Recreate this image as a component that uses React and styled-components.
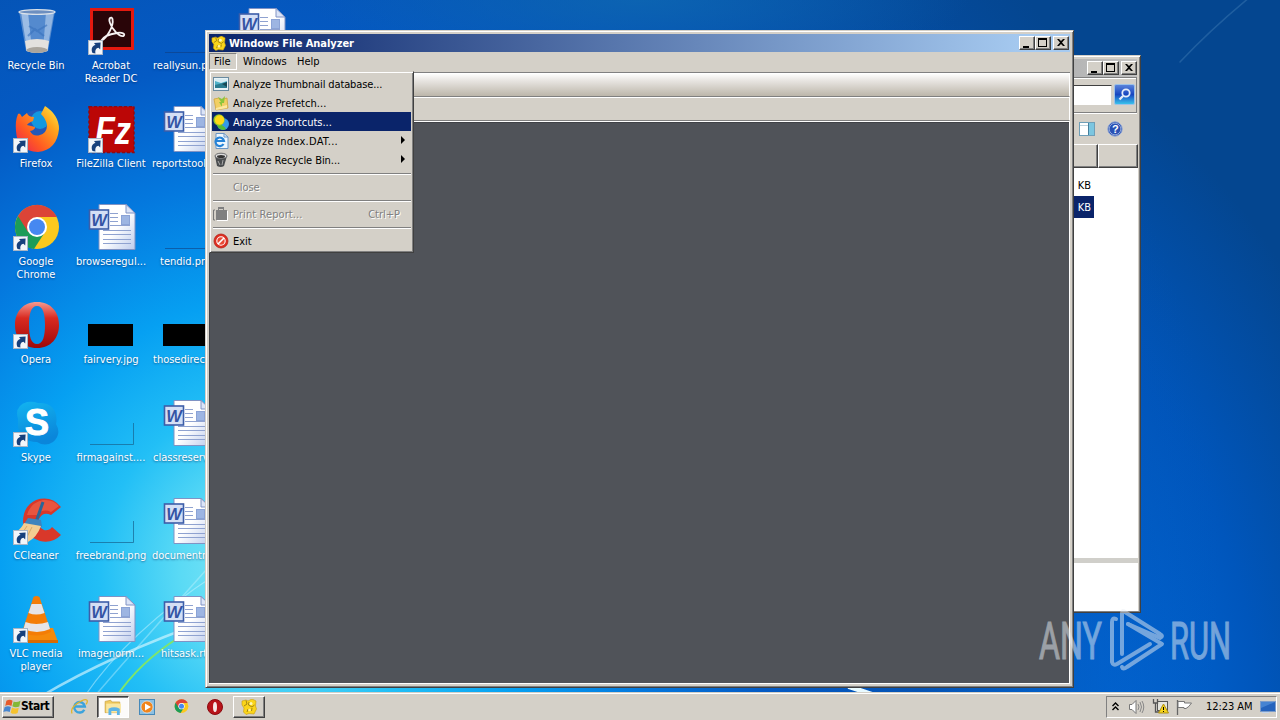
import React from "react";
import styled, { createGlobalStyle, css } from "styled-components";

const face = "#d4d0c8";
const shade = "#808080";
const dark = "#404040";
const navy = "#0a246a";

const GlobalStyle = createGlobalStyle`
  * { box-sizing: border-box; }
  body { margin: 0; overflow: hidden; }
  #root { width: 1280px; height: 720px; }
  svg { display: block; flex: none; }
`;

const raised = css`
  border: 1px solid;
  border-color: #fff ${dark} ${dark} #fff;
  box-shadow: inset -1px -1px 0 ${shade};
`;

const Screen = styled.div`
  position: relative;
  display: flex;
  flex-direction: column;
  width: 1280px;
  height: 720px;
  overflow: hidden;
  color: #000;
  font: 11px/13px "DejaVu Sans Condensed", "DejaVu Sans", sans-serif;
  font-stretch: condensed;
  white-space: nowrap;
  background:
    radial-gradient(ellipse 330px 70px at 640px 0, rgba(14, 105, 178, 0.75), rgba(14, 105, 178, 0)),
    radial-gradient(circle 1000px at 270px 570px, #8ceaf6 0, #5adaf5 9%, #22bff6 17%, #06a0f2 27%, #0478de 39%, #045ac4 51%, #0553b4 66%, rgba(5, 80, 170, 0) 95%),
    radial-gradient(ellipse 520px 760px at 900px 780px, #0078ea 0, #0068d8 42%, #0056bc 70%, #044690 100%);
`;

const Wallpaper = styled.svg`
  position: absolute;
  inset: 0;
`;

/* Desktop shortcuts */
const Desktop = styled.main`
  position: relative;
  flex: 1;
  display: grid;
  grid-auto-flow: column;
  grid-template-rows: repeat(7, 98px);
  grid-auto-columns: 75px;
  height: 692px;
  padding-top: 8px;
`;

const Shortcut = styled.div`
  display: flex;
  flex-direction: column;
  align-items: center;
  padding-right: 2px;
`;

const Label = styled.span`
  width: 75px;
  margin: 3px 0 0 -1px;
  display: flex;
  flex-direction: column;
  align-items: center;
  color: #fff;
  text-shadow: 0 1px 2px rgba(0, 30, 80, 0.55);
  ${(p) =>
    p.$indent &&
    css`
      align-self: flex-start;
      align-items: flex-start;
      margin-left: 0;
      padding-left: ${p.$indent}px;
    `}
`;

/* Windows */
const Window = styled.section`
  position: absolute;
  left: ${(p) => p.$x}px;
  top: ${(p) => p.$y}px;
  width: ${(p) => p.$w}px;
  height: ${(p) => p.$h}px;
  display: flex;
  flex-direction: column;
  padding: 3px;
  background: ${face};
  border: 1px solid;
  border-color: ${face} ${dark} ${dark} ${face};
  box-shadow: inset 1px 1px 0 #fff, inset -1px -1px 0 ${shade};
`;

const TitleBar = styled.header`
  display: flex;
  align-items: center;
  height: 18px;
  flex: none;
  padding: 0 ${(p) => (p.$active ? 1 : 0)}px 0 2px;
  color: #fff;
  font-weight: bold;
  background: ${(p) =>
    p.$active ? "linear-gradient(90deg, #0a246a, #a6caf0 95%)" : "linear-gradient(90deg, #808080, #c0c0c0)"};
`;

const Title = styled.span`
  flex: 1;
  margin-left: 3px;
  letter-spacing: -0.05px;
`;

const Controls = styled.div`
  display: flex;
`;

const ControlButton = styled.span`
  width: 16px;
  height: 14px;
  margin-left: ${(p) => (p.$gap ? 2 : 0)}px;
  background: ${face};
  ${raised}
`;

const MenuBar = styled.nav`
  display: flex;
  height: 20px;
  flex: none;
  padding-top: 1px;
`;

const MenuTitle = styled.span`
  height: 17px;
  padding: ${(p) => (p.$open ? "1px 4px 0 4px" : "1px 5px 0 5px")};
  letter-spacing: ${(p) => p.$track || 0}px;
  border: 1px solid;
  border-color: ${(p) => (p.$open ? `${shade} #fff #fff ${shade}` : "transparent")};
  width: ${(p) => p.$w}px;
`;

const Bands = styled.div`
  flex: none;
  border-top: 1px solid ${shade};
  border-bottom: 1px solid #fff;
`;

const Band = styled.div`
  height: 24px;
  border: 1px solid;
  border-color: #fff #fff ${shade} ${shade};
  background: ${(p) => (p.$glossy ? "linear-gradient(#fdfdfc, #e8e5e1 30%, #bcb6aa)" : face)};
`;

const Workspace = styled.div`
  flex: 1;
  background: #505359;
  border: solid #fff;
  border-width: 0 1px 1px 0;
  box-shadow: inset 1px 1px 0 #404247;
`;

const Menu = styled.div`
  position: absolute;
  left: 3px;
  top: 40px;
  width: 205px;
  height: 182px;
  display: flex;
  flex-direction: column;
  padding: 2px 2px 1px 2px;
  background: ${face};
  border: 1px solid;
  border-color: ${face} ${dark} ${dark} ${face};
  box-shadow: inset 1px 1px 0 #fff, inset -1px -1px 0 ${shade};
`;

const MenuItem = styled.div`
  display: grid;
  grid-template-columns: 16px 1fr auto;
  column-gap: 4px;
  align-items: center;
  height: 19px;
  flex: none;
  padding: 0 6px 0 1px;
  color: ${(p) => (p.$active ? "#fff" : p.$disabled ? shade : "#000")};
  background: ${(p) => (p.$active ? navy : "transparent")};
  text-shadow: ${(p) => (p.$disabled ? "1px 1px 0 #fff" : "none")};
`;

const ItemText = styled.span`
  padding-top: 2px;
  letter-spacing: ${(p) => p.$track || 0}px;
`;

const Accel = styled.span`
  padding: 2px 5px 0 0;
`;

const SubArrow = styled.svg`
  margin-top: -2px;
`;

const Separator = styled.div`
  height: 2px;
  margin: 4px 0 2px 1px;
  flex: none;
  border-top: 1px solid ${shade};
  border-bottom: 1px solid #fff;
`;

/* Explorer window behind */
const AddressRow = styled.div`
  display: flex;
  justify-content: flex-end;
  align-items: center;
  gap: 2px;
  height: 36px;
  flex: none;
  border: 1px solid;
  border-color: ${shade} ${shade} ${shade} #fff;
  box-shadow: inset 0 1px 0 #fff, 0 1px 0 #fff;
`;

const SearchBox = styled.span`
  width: 220px;
  height: 21px;
  background: #fff;
  border: 1px solid;
  border-color: ${dark} ${face} ${face} ${dark};
`;

const CommandRow = styled.div`
  display: flex;
  justify-content: flex-end;
  align-items: center;
  gap: 12px;
  height: 31px;
  padding: 1px 14px 0 0;
  flex: none;
`;

const HeaderRow = styled.div`
  display: grid;
  grid-template-columns: 1fr 40px;
  height: 24px;
  margin-right: -1px;
  flex: none;
`;

const HeaderCell = styled.span`
  background: ${face};
  ${raised}
`;

const FileList = styled.div`
  display: flex;
  flex-direction: column;
  align-items: flex-end;
  flex: 1;
  margin-right: -1px;
  padding: 6px 44px 0 0;
  background: #fff;
`;

const FileCell = styled.span`
  width: 200px;
  height: 22px;
  padding: 5px 3px 0 0;
  text-align: right;
  color: ${(p) => (p.$active ? "#fff" : "#000")};
  background: ${(p) => (p.$active ? navy : "transparent")};
`;

const Details = styled.div`
  height: 53px;
  margin: 0 -1px -2px 0;
  flex: none;
  background: #fff;
  border-top: 5px solid #d0cfca;
`;

/* Watermark */
const Watermark = styled.div`
  position: absolute;
  left: 1039px;
  top: 607px;
  display: flex;
  align-items: center;
  height: 66px;
  opacity: 0.5;
  color: #e6ecf2;
`;

const MarkWord = styled.span`
  width: ${(p) => p.$w}px;
  padding-top: 3px;
  font: 400 51px/66px Roboto, sans-serif;
  -webkit-text-stroke: 1px #e6ecf2;
  transform: scaleX(${(p) => p.$scale});
  transform-origin: 0 50%;
`;

/* Taskbar */
const Taskbar = styled.footer`
  position: relative;
  display: flex;
  align-items: center;
  height: 28px;
  padding: 3px 3px 3px 2px;
  background: ${face};
  border-top: 1px solid ${face};
  box-shadow: inset 0 1px 0 #fff;
`;

const StartButton = styled.span`
  display: flex;
  align-items: center;
  width: 52px;
  height: 22px;
  margin-right: 9px;
  font-weight: bold;
  font-size: 12px;
  letter-spacing: -0.5px;
  ${raised}
`;

const Task = styled.span`
  display: flex;
  align-items: center;
  justify-content: center;
  width: 32px;
  height: 22px;
  margin-right: 2px;
  ${(p) => p.$state === "open" && raised}
  ${(p) =>
    p.$state === "pressed" &&
    css`
      background: #fcfbfa;
      border: 1px solid;
      border-color: ${dark} #fff #fff ${dark};
      box-shadow: inset 1px 1px 0 ${shade};
    `}
`;

const Tray = styled.div`
  display: flex;
  align-items: center;
  gap: 7px;
  width: 171px;
  height: 22px;
  margin-left: auto;
  padding-left: 5px;
  border: 1px solid;
  border-color: ${shade} #fff #fff ${shade};
`;

const TrayExpander = styled.span`
  margin-right: 2px;
`;

const Clock = styled.span`
  margin-left: 6px;
  width: 47px;
  letter-spacing: -0.05px;
`;

/* ---------- drawings ---------- */
const Arrow = () => (
  <g>
    <rect x="0.5" y="32.5" width="14" height="14" fill="#f3f6fa" stroke="#a9b6c6" />
    <path d="M4.500 45C2.700 41 4.200 37.500 7.500 37L6 35 12.600 34.600 12.200 41.500 10.500 39.800C8.200 40.300 6.800 42 7.500 45.500Z" fill="#17407c" />
  </g>
);

const Icon = ({ children, link }) => (
  <svg width="48" height="48" viewBox="0 0 48 48">
    {children}
    {link && <Arrow />}
  </svg>
);

const BinIcon = () => (
  <Icon>
    <path d="M6 3H42L35 43Q24 47 13 43Z" fill="#7fa6d8" fillOpacity=".65" />
    <path d="M8 4L14 42H19L15 4Z" fill="#d5e6f7" fillOpacity=".55" />
    <path d="M33 4L30 42H34L41 4Z" fill="#dce9f8" fillOpacity=".45" />
    <path d="M16 18L24 23 34 17M15 28L22 21 31 28" stroke="#3972bd" strokeWidth="2" fill="none" opacity=".6" />
    <path d="M12 33Q24 29 36 33L34.500 43Q24 47 13.500 43Z" fill="#e3e1de" />
    <ellipse cx="24" cy="42" rx="10.500" ry="3" fill="#aaa59d" />
    <ellipse cx="24" cy="4" rx="18" ry="2.300" fill="#6d8fc0" stroke="#dbe2ea" strokeWidth="1.300" />
  </Icon>
);

const AcrobatIcon = () => (
  <Icon link>
    <rect x="2" y="0" width="44" height="42" fill="#e3190f" />
    <rect x="5" y="3" width="38" height="36" fill="#290508" />
    <path d="M13 33C19 30 26 18 24.500 11C23.500 8 20 10 22 15C24 21 31 29 35.500 28C38 26 34 24 29 25C22 26 15 29 13 33Z" fill="none" stroke="#f5f1f1" strokeWidth="1.800" />
  </Icon>
);

const FirefoxIcon = () => (
  <Icon link>
    <defs>
      <linearGradient id="ff" x1="0" y1="1" x2="1" y2="0">
        <stop offset="0" stopColor="#e8195b" /><stop offset=".35" stopColor="#ff5a22" />
        <stop offset=".7" stopColor="#ffa51c" /><stop offset="1" stopColor="#fff04a" />
      </linearGradient>
    </defs>
    <circle cx="24" cy="21" r="17" fill="#2358b9" />
    <circle cx="27" cy="14" r="9" fill="#1298e0" />
    <path d="M5 8Q7 6 9 11L14 7Q15 11 21 11L20 15Q15 17 14 19L22 21Q22 24 17 25Q20 31 27 29Q34 27 34 19Q33 13 28 8L32 0Q46 9 46 23Q44 44 25 46Q4 45 3 25Q2 15 5 8Z" fill="url(#ff)" />
  </Icon>
);

const FileZillaIcon = () => (
  <Icon link>
    <rect x="1" y="0.500" width="45" height="46" fill="#bb0606" stroke="#8e0b12" strokeWidth="1.500" strokeDasharray="3 2" />
    <text x="7" y="38" fontFamily="Liberation Sans" fontWeight="bold" fontStyle="italic" fontSize="38" fill="#fff" textLength="36" lengthAdjust="spacingAndGlyphs">Fz</text>
  </Icon>
);

const ChromeArt = () => (
  <>
    <circle cx="24" cy="23" r="22" fill="#fbc91e" />
    <path d="M24 23L5 12A22 22 0 0 0 21 45L32 28Z" fill="#1c9c58" />
    <path d="M5 12L15 28 24 13H44A22 22 0 0 0 5 12Z" fill="#dc4437" />
    <circle cx="24" cy="23" r="10" fill="#fff" />
    <circle cx="24" cy="23" r="8" fill="#4688f1" />
  </>
);

const OperaArt = ({ id }) => (
  <>
    <defs>
      <linearGradient id={id} x1="0" y1="0" x2="0" y2="1">
        <stop offset="0" stopColor="#f59a90" /><stop offset=".35" stopColor="#d92a20" /><stop offset="1" stopColor="#9e080a" />
      </linearGradient>
    </defs>
    <path fillRule="evenodd" d="M24 0C38 0 46 10 46 23S38 46 24 46 2 36 2 23 10 0 24 0ZM24 4C18 4 16 12 16 23S18 42 24 42 32 34 32 23 30 4 24 4Z" fill={`url(#${id})`} />
  </>
);

const SkypeIcon = () => (
  <Icon link>
    <defs>
      <linearGradient id="sk" x1="0" y1="0" x2=".3" y2="1">
        <stop offset="0" stopColor="#12b4f0" /><stop offset="1" stopColor="#0a86da" />
      </linearGradient>
    </defs>
    <path d="M14 2Q20 1 25 3Q40 2 43 15Q44 20 43 24Q49 34 40 42Q32 47 24 42Q8 42 5 27V19Q1 6 14 2Z" fill="url(#sk)" />
    <text x="12" y="35" fontFamily="Liberation Sans" fontWeight="bold" fontSize="36" fill="#fff" stroke="#fff">S</text>
  </Icon>
);

const CCleanerIcon = () => (
  <Icon link>
    <path d="M48 9L38 17Q30 13 26 21Q24 29 31 32Q36 33 39 29L48 37Q39 46 27 43Q12 38 10 24Q10 8 23 2Q38 -3 48 9Z" fill="#d9382a" />
    <path d="M46 8L38 14Q30 10 24 17L14 17Q17 5 30 2Q40 1 46 8Z" fill="#ee6248" opacity=".7" />
    <path d="M30 4L23 24" stroke="#2a6698" strokeWidth="3" />
    <path d="M15 20L28 22 29 29 11 26Z" fill="#3e83bd" />
    <path d="M11 25L28 28Q24 39 15 44L3 34Q8 31 11 25Z" fill="#f3cd92" />
    <path d="M14 28L8 37M19 29L13 41" stroke="#d9a968" />
  </Icon>
);

const VlcIcon = () => (
  <Icon link>
    <path d="M8 32H40L45 46H5Z" fill="#f58a0b" />
    <path d="M5 44H45V47H5Z" fill="#d86b04" />
    <path d="M20.500 1Q23.500 -1 26.500 1L38 36Q24 43 9 36Z" fill="#f47d06" />
    <path d="M18.500 8H28.500L31.500 17Q23 20 15.500 17Z" fill="#e6e4e6" />
    <path d="M12.500 26Q23 30 35 26L37 33Q24 39 10.500 33Z" fill="#e6e4e6" />
  </Icon>
);

const WordIcon = () => (
  <Icon>
    <defs>
      <linearGradient id="wp" x1="0" y1="0" x2="1" y2="1"><stop offset=".5" stopColor="#fff" /><stop offset="1" stopColor="#bccbec" /></linearGradient>
    </defs>
    <path d="M11 0.500H38L47 9V45.500H11Z" fill="url(#wp)" stroke="#8093c4" />
    <path d="M38 0.500V9H47Z" fill="#dbe4f7" stroke="#8093c4" />
    <path d="M22 9.500H30M22 13.500H30M22 17.500H30M22 21.500H42M15 26.500H43M15 30.500H43M15 35.500H43M15 39.500H43" stroke="#8fa2d0" />
    <rect x="33.500" y="11.500" width="8" height="9" fill="#9db5e2" stroke="#8ba3d6" />
    <rect x="1.500" y="6" width="19" height="19" fill="#d4dff5" stroke="#3d5ea9" strokeWidth="1.600" />
    <text x="3.200" y="21.500" fontFamily="Liberation Sans" fontWeight="bold" fontStyle="italic" fontSize="16.500" fill="#3454a4">W</text>
  </Icon>
);

const ThumbIcon = ({ kind }) => (
  <Icon>
    {kind === "black" && <rect x="0" y="22" width="45" height="22" fill="#000" />}
    {kind === "line" && <path d="M2 44.500H46" stroke="#123a78" strokeOpacity=".55" />}
    {kind === "corner" && <path d="M2 44.500H45.500V23" fill="none" stroke="#186a96" strokeOpacity=".75" />}
  </Icon>
);

const Glyph = {
  min: <rect x="3" y="9" width="6" height="2" />,
  max: <path d="M2 1H11V10H2ZM3 3V9H10V3Z" fillRule="evenodd" />,
  close: <path d="M3 2H5L7 4 9 2H11L8 5.500 11 9H9L7 7 5 9H3L6 5.500Z" />,
};

const WindowControls = () => (
  <Controls>
    {["min", "max", "close"].map((k) => (
      <ControlButton key={k} $gap={k === "close"}>
        <svg width="14" height="12" shapeRendering={k === "close" ? "auto" : "crispEdges"}>{Glyph[k]}</svg>
      </ControlButton>
    ))}
  </Controls>
);

const Small = ({ children, size = 16 }) => (
  <svg width={size} height={size} viewBox="0 0 16 16">{children}</svg>
);

const AnalyzerIcon = ({ size = 15 }) => (
  <Small size={size}>
    <path d="M1 2L5 1 7 2 11 0 15 2 14.500 7 15.500 10 13 15 8 14.500 5 15.500 2.500 13 3 9 1 6Z" fill="#fbd51a" stroke="#c79c0c" strokeWidth=".6" />
    <path d="M5 1.500L6 5 3 7M8 3L7.500 6 11 8 13.500 6M7 10L6 13M11 9L10.500 12" stroke="#8d7010" strokeWidth=".8" fill="none" />
    <circle cx="10" cy="4.500" r="1.500" fill="#fff8b5" /><circle cx="8.500" cy="11" r="1.300" fill="#fff09a" />
  </Small>
);

const menuIcons = {
  thumb: (
    <Small>
      <rect x=".5" y="1.500" width="15" height="13" fill="#e7f2f6" stroke="#6a8ba0" />
      <rect x="2" y="3" width="12" height="9" fill="#4fb1c8" />
      <path d="M2 3H14V5L8 7 2 5Z" fill="#d7edf4" /><path d="M2 12V9L6 8 14 6V12Z" fill="#2b7c90" /><path d="M9 8L14 6V11Z" fill="#174855" />
    </Small>
  ),
  prefetch: (
    <Small>
      <path d="M1 4L6 3 7 5 14 3 15 13 3 15Z" fill="#f2cf63" stroke="#d0a53c" strokeWidth=".8" />
      <path d="M5 2L8 7 6 7 9 12 9 8 11 8 12 1 9 4Z" fill="#8bc63c" />
      <path d="M3 13L14 10V13L3 15Z" fill="#fbe8a0" />
    </Small>
  ),
  shortcuts: (
    <Small>
      <circle cx="10" cy="10" r="6" fill="#3499e8" /><path d="M4 11A6 6 0 0 0 13 15Q9 9 4 11Z" fill="#55bb35" />
      <circle cx="6" cy="6" r="5.700" fill="#91c52b" /><circle cx="6.500" cy="6" r="4.700" fill="#ffd817" />
    </Small>
  ),
  index: (
    <Small>
      <path d="M3 .5H11L15 4V15.500H3Z" fill="#eef6fd" stroke="#6b96c5" /><path d="M11 .5V4H15" fill="none" stroke="#6b96c5" />
      <path d="M10.500 11A4.300 4.300 0 1 1 11 8H3" fill="none" stroke="#2683d7" strokeWidth="2.200" />
    </Small>
  ),
  bin: (
    <Small>
      <path d="M2 4L4 14Q8 16 11 14L14 4Z" fill="#4a4d4f" /><ellipse cx="8" cy="4" rx="6" ry="2.800" fill="#ddd" stroke="#505254" strokeWidth=".8" />
      <ellipse cx="8" cy="4.500" rx="4" ry="1.500" fill="#333" /><path d="M5 9L7 13M10 8L9 13" stroke="#aaa" />
    </Small>
  ),
  print: (
    <Small>
      <path d="M3 4H5V1H11V4H14V14H3Z" fill="#808080" /><path d="M.5 4V14M.5 4H2M.5 14H2" stroke="#777" /><path d="M6 3.500H10" stroke={face} /><path d="M14.500 5V14.500H4" fill="none" stroke="#fff" />
    </Small>
  ),
  exit: (
    <Small>
      <circle cx="8" cy="8" r="7" fill="#df2d20" stroke="#b2241a" strokeWidth=".8" /><circle cx="8" cy="8" r="4.200" fill="#e84a35" stroke="#fff" strokeWidth="1.100" />
      <path d="M5 11L11 5" stroke="#fff" strokeWidth="1.600" />
    </Small>
  ),
};

const IeIcon = () => (
  <Small size={17}>
    <path d="M12.500 11A5 5 0 1 1 13 8H4" fill="none" stroke="#3ba3dc" strokeWidth="2.300" />
    <path d="M1 14.500Q-1 10 6 5Q13 0 15 2Q16 4 14 6" fill="none" stroke="#e0b52b" strokeWidth="1.200" />
  </Small>
);
const FolderIcon = () => (
  <Small size={18}>
    <path d="M1 3L6 2 7 3.500H14V13H1Z" fill="#f0ca60" stroke="#c69e39" strokeWidth=".6" /><path d="M2 5H15V13H2Z" fill="#fae6a0" />
    <path d="M4 15V9.500Q9 7 14 9.500V15H11.500V11.500H6.500V15Z" fill="#5db4e6" />
  </Small>
);
const MediaIcon = () => (
  <Small>
    <rect x=".5" y=".5" width="15" height="15" fill="#8cc0e2" stroke="#4689b9" /><circle cx="8" cy="8" r="6" fill="#f0851c" stroke="#e8f2fa" strokeWidth=".6" /><path d="M6 4.500L12 8 6 11.500Z" fill="#fff" />
  </Small>
);
const FlagLogo = () => (
  <Small size={18}>
    <path d="M3 2.500Q6 0.500 8.500 2.500L7.500 7Q4.500 5.500 2 7Z" fill="#e65a2a" /><path d="M9.500 3Q12 4.500 15.500 2.500L14.500 7.500Q11 9 8.300 7.300Z" fill="#83b836" />
    <path d="M1.500 8Q4.500 6.500 7 8L6 12.500Q3 11 .3 12.500Z" fill="#4786cf" /><path d="M8 8.500Q11 10 14 8.700L13 13.300Q9.500 15 6.800 13Z" fill="#f5c22e" />
  </Small>
);

const desktopItems = [
  { icon: <BinIcon />, lines: ["Recycle Bin"] },
  { icon: <FirefoxIcon />, lines: ["Firefox"] },
  { icon: <Icon link><ChromeArt /></Icon>, lines: ["Google", "Chrome"] },
  { icon: <Icon link><OperaArt id="op" /></Icon>, lines: ["Opera"] },
  { icon: <SkypeIcon />, lines: ["Skype"] },
  { icon: <CCleanerIcon />, lines: ["CCleaner"] },
  { icon: <VlcIcon />, lines: ["VLC media", "player"] },
  { icon: <AcrobatIcon />, lines: ["Acrobat", "Reader DC"] },
  { icon: <FileZillaIcon />, lines: ["FileZilla Client"] },
  { icon: <WordIcon />, lines: ["browseregul..."] },
  { icon: <ThumbIcon kind="black" />, lines: ["fairvery.jpg"] },
  { icon: <ThumbIcon kind="corner" />, lines: ["firmagainst...."] },
  { icon: <ThumbIcon kind="corner" />, lines: ["freebrand.png"] },
  { icon: <WordIcon />, lines: ["imagenorm..."] },
  { icon: <ThumbIcon kind="line" />, lines: ["reallysun.p"], indent: 3 },
  { icon: <WordIcon />, lines: ["reportstool"], indent: 2 },
  { icon: <ThumbIcon kind="line" />, lines: ["tendid.pn"], indent: 10 },
  { icon: <ThumbIcon kind="black" />, lines: ["thosedirect"], indent: 3 },
  { icon: <WordIcon />, lines: ["classreserv"], indent: 3 },
  { icon: <WordIcon />, lines: ["documentm"], indent: 2 },
  { icon: <WordIcon />, lines: ["hitsask.rt"], indent: 11 },
  { icon: <WordIcon />, lines: [] },
];

const menuItems = [
  { icon: "thumb", text: "Analyze Thumbnail database...", track: -0.13 },
  { icon: "prefetch", text: "Analyze Prefetch...", track: 0.05 },
  { icon: "shortcuts", text: "Analyze Shortcuts...", active: true },
  { icon: "index", text: "Analyze Index.DAT...", sub: true, track: 0.25 },
  { icon: "bin", text: "Analyze Recycle Bin...", sub: true, track: -0.07 },
  null,
  { text: "Close", disabled: true, track: -0.1 },
  null,
  { icon: "print", text: "Print Report...", accel: "Ctrl+P", disabled: true, track: 0.1 },
  null,
  { icon: "exit", text: "Exit" },
];

export default function App() {
  return (
    <Screen>
      <GlobalStyle />
      <Wallpaper width="1280" height="720">
        <g fill="none" strokeLinecap="round">
          <path d="M40 697Q110 655 215 618" stroke="#d8f8ff" strokeWidth="2.500" opacity=".65" />
          <path d="M84 697Q130 630 215 575" stroke="#c8f4ff" strokeWidth="1.200" opacity=".5" />
          <path d="M94 697Q130 655 215 560" stroke="#c8f4ff" strokeWidth="1.500" opacity=".4" />
          <path d="M116 697Q140 662 178 638" stroke="#7fe66a" strokeWidth="2" />
          <path d="M1180 62Q1210 30 1250 -3" stroke="#5f98c8" strokeWidth="1.500" opacity=".3" />
          <path d="M850 687L880 697" stroke="#e8faff" strokeWidth="5" />
        </g>
      </Wallpaper>

      <Desktop>
        {desktopItems.map(({ icon, lines, indent }, i) => (
          <Shortcut key={i}>
            {icon}
            <Label $indent={indent}>{lines.map((l) => <span key={l}>{l}</span>)}</Label>
          </Shortcut>
        ))}
      </Desktop>

      <Window $x={760} $y={55} $w={381} $h={558}>
        <TitleBar>
          <Title />
          <WindowControls />
        </TitleBar>
        <AddressRow>
          <SearchBox />
          <svg width="22" height="22" viewBox="0 0 22 22">
            <defs><linearGradient id="sb" x1="0" y1="0" x2="0" y2="1"><stop offset="0" stopColor="#5d86dc" /><stop offset=".5" stopColor="#1746c0" /><stop offset="1" stopColor="#39c8ee" /></linearGradient></defs>
            <rect x=".5" y=".5" width="20" height="20" rx="1.500" fill="url(#sb)" stroke="#9dc2e8" />
            <circle cx="12" cy="9" r="3.700" fill="none" stroke="#e6edfa" strokeWidth="1.800" /><path d="M9 12L5.500 15.500" stroke="#e6edfa" strokeWidth="2.300" />
          </svg>
        </AddressRow>
        <CommandRow>
          <svg width="16" height="14"><rect x=".5" y=".5" width="15" height="13" fill="#fff" stroke="#6f9fb8" /><path d="M1 3.500H15" stroke="#bcd3de" /><rect x="10" y="1" width="5" height="12" fill="#7cc6e0" /><path d="M9.500 1V13" stroke="#467e9b" /></svg>
          <svg width="16" height="16">
            <circle cx="8" cy="8" r="7.200" fill="#2850b4" stroke="#8fa5d4" /><circle cx="8" cy="8" r="5.800" fill="none" stroke="#b9c8ea" strokeWidth=".7" /><text x="5" y="12" fontFamily="Liberation Sans" fontWeight="bold" fontSize="11" fill="#fff">?</text>
          </svg>
        </CommandRow>
        <HeaderRow><HeaderCell /><HeaderCell /></HeaderRow>
        <FileList>
          <FileCell>KB</FileCell>
          <FileCell $active>KB</FileCell>
        </FileList>
        <Details />
      </Window>

      <Window $x={205} $y={30} $w={869} $h={658}>
        <TitleBar $active>
          <AnalyzerIcon />
          <Title>Windows File Analyzer</Title>
          <WindowControls />
        </TitleBar>
        <MenuBar>
          <MenuTitle $open $w={28}>File</MenuTitle>
          <MenuTitle $w={54} $track={-0.1}>Windows</MenuTitle>
          <MenuTitle $w={36}>Help</MenuTitle>
        </MenuBar>
        <Bands>
          <Band $glossy />
          <Band />
        </Bands>
        <Workspace />
        <Menu>
          {menuItems.map((m, i) =>
            m ? (
              <MenuItem key={i} $active={m.active} $disabled={m.disabled}>
                {m.icon ? menuIcons[m.icon] : <i />}
                <ItemText $track={m.track}>{m.text}</ItemText>
                {m.accel && <Accel>{m.accel}</Accel>}
                {m.sub && <SubArrow width="4" height="8"><path d="M0 0L4 4 0 8Z" /></SubArrow>}
              </MenuItem>
            ) : (
              <Separator key={i} />
            )
          )}
        </Menu>
      </Window>

      <Taskbar>
        <StartButton><FlagLogo /><span>Start</span></StartButton>
        <Task><IeIcon /></Task>
        <Task $state="pressed"><FolderIcon /></Task>
        <Task><MediaIcon /></Task>
        <Task><svg width="15" height="15" viewBox="0 0 48 48"><ChromeArt /></svg></Task>
        <Task>
          <svg width="16" height="16"><circle cx="8" cy="8" r="7.500" fill="#b8141a" stroke="#8a0a10" /><ellipse cx="8" cy="8" rx="2" ry="5" fill="#f6e9e7" /></svg>
        </Task>
        <Task $state="open"><AnalyzerIcon size={16} /></Task>
        <Tray>
          <TrayExpander>
            <svg width="7" height="10"><path d="M.5 4L3.500 1 6.500 4M.5 8L3.500 5 6.500 8" fill="none" stroke="#000" strokeWidth="1.400" /></svg>
          </TrayExpander>
          <svg width="17" height="16">
            <path d="M1.500 5.500H4L8 1.500V14.500L4 10.500H1.500Z" fill="#fff" stroke="#777" /><path d="M10 5Q12 8 10 11M12 3Q15 8 12 13M14 2Q17.500 8 14 14" fill="none" stroke="#888" />
          </svg>
          <svg width="17" height="17">
            <rect x="5.500" y="3.500" width="10" height="9" fill="#e5e5de" stroke="#555" /><path d="M1.500 1V5H5.500V1M3.500 5V14H7" fill="none" stroke="#555" strokeWidth="1.300" /><path d="M11.500 6L16.500 15H6.500Z" fill="#f7d51c" stroke="#ae8f12" /><path d="M11.500 9V12M11.500 13V14" stroke="#000" />
          </svg>
          <svg width="17" height="16">
            <path d="M1.500 1V16" stroke="#666" strokeWidth="1.300" /><path d="M2 2.500H8.500V4H15.500Q13 8 10 9.500H8V8.500H2Z" fill="#fff" stroke="#777" />
          </svg>
          <Clock>12:23 AM</Clock>
          <svg width="16" height="14"><rect x=".5" y="1.500" width="15" height="10" fill="#2463bd" stroke="#7c9cc9" /><path d="M1 2H15L1 8Z" fill="#4583d2" /><path d="M2 12.500H9" stroke="#bfd3ed" /></svg>
        </Tray>
      </Taskbar>

      <Watermark>
        <MarkWord $w={71} $scale={0.63}>ANY</MarkWord>
        <svg width="60" height="66" fill="none" stroke="#e6ecf2" strokeWidth="4" strokeLinejoin="round" strokeLinecap="round">
          <path d="M6 12Q2 10 2 15V55Q3 59 7 57L40 37" />
          <path d="M12 47V6Q12 3 15 5L50 27Q54 29 50 31L18 17" />
          <path d="M18 17L52 37L17 60Q13 63 12 60" />
        </svg>
        <MarkWord $w={60} $scale={0.605}>RUN</MarkWord>
      </Watermark>
    </Screen>
  );
}
